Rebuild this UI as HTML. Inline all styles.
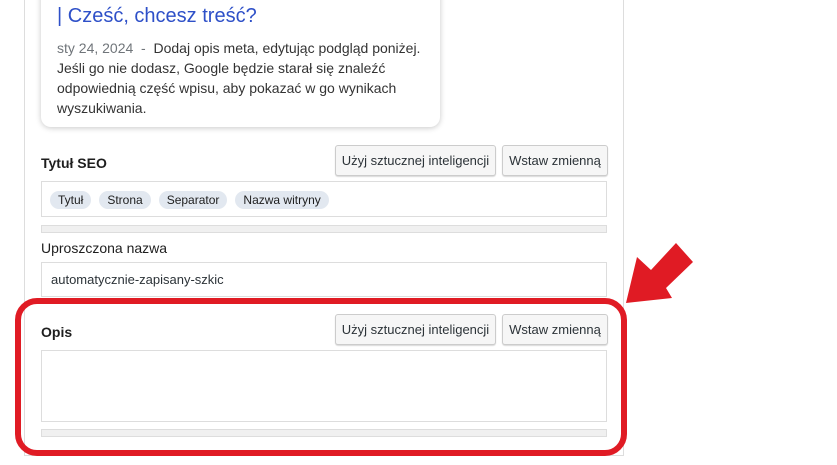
<!DOCTYPE html>
<html><head><meta charset="utf-8"><style>
body{margin:0;width:837px;height:465px;background:#fff;position:relative;overflow:hidden;font-family:"Liberation Sans",sans-serif;}
.a{position:absolute}
.panel{left:24px;top:-2px;width:598px;height:457px;border-left:1px solid #ddd;border-right:1px solid #ddd;border-bottom:1px solid #ddd;}
.card{left:41px;top:-20px;width:399px;height:147px;border-radius:10px;box-shadow:0 1px 6px rgba(0,0,0,.22);background:#fff}
.lbl{font-size:14px;font-weight:bold;color:#1e1e1e}
.btn{height:29px;border:1px solid #ccc;border-radius:3px;background:#f6f6f6;box-shadow:0 1px 1px rgba(0,0,0,.15);font-size:13px;color:#2c3338;line-height:29px;text-align:center}
.box{border:1px solid #ddd;background:#fff}
.bar{height:6px;border:1px solid #ddd;background:#f0f0f0}
.chip{display:inline-block;background:#e2e8f0;border-radius:10px;padding:0 8px;height:18px;line-height:18px;font-size:12px;color:#1e1e1e;margin-right:8px}
</style></head><body>
<div class="a panel"></div>
<div class="a card"></div>
<div class="a" style="left:57px;top:5px;font-size:20px;color:#2e50c8">| Cześć, chcesz treść?</div>
<div class="a" style="left:57px;top:38px;width:380px;font-size:14px;line-height:20px;color:#333"><span style="color:#70757a">sty 24, 2024 &nbsp;- </span>&nbsp;Dodaj opis meta, edytując podgląd poniżej. Jeśli go nie dodasz, Google będzie starał się znaleźć odpowiednią część wpisu, aby pokazać w go wynikach wyszukiwania.</div>

<div class="a lbl" style="left:41px;top:155px">Tytuł SEO</div>
<div class="a btn" style="left:335px;top:145px;width:159px">Użyj sztucznej inteligencji</div>
<div class="a btn" style="left:502px;top:145px;width:104px">Wstaw zmienną</div>
<div class="a box" style="left:41px;top:181px;width:564px;height:34px"><div style="padding:9px 0 0 8px"><span class="chip">Tytuł</span><span class="chip">Strona</span><span class="chip">Separator</span><span class="chip">Nazwa witryny</span></div></div>
<div class="a bar" style="left:41px;top:225px;width:564px"></div>

<div class="a lbl" style="left:41px;top:240px;font-weight:normal;color:#1e1e1e">Uproszczona nazwa</div>
<div class="a box" style="left:41px;top:262px;font-size:13px;color:#2c3338;line-height:33px;padding-left:9px;box-sizing:border-box;width:566px;height:35px">automatycznie-zapisany-szkic</div>

<div class="a lbl" style="left:41px;top:324px">Opis</div>
<div class="a btn" style="left:335px;top:314px;width:159px">Użyj sztucznej inteligencji</div>
<div class="a btn" style="left:502px;top:314px;width:104px">Wstaw zmienną</div>
<div class="a box" style="left:41px;top:350px;width:564px;height:70px"></div>
<div class="a bar" style="left:41px;top:429px;width:564px"></div>

<div class="a" style="left:15px;top:298px;width:600px;height:146px;border:6px solid #e01b24;border-radius:22px"></div>
<svg class="a" style="left:0;top:0" width="837" height="465"><polygon points="626,303 637,257 651,270 676,243 693,262 666,288 672,298" fill="#e01b24"/></svg>
</body></html>
